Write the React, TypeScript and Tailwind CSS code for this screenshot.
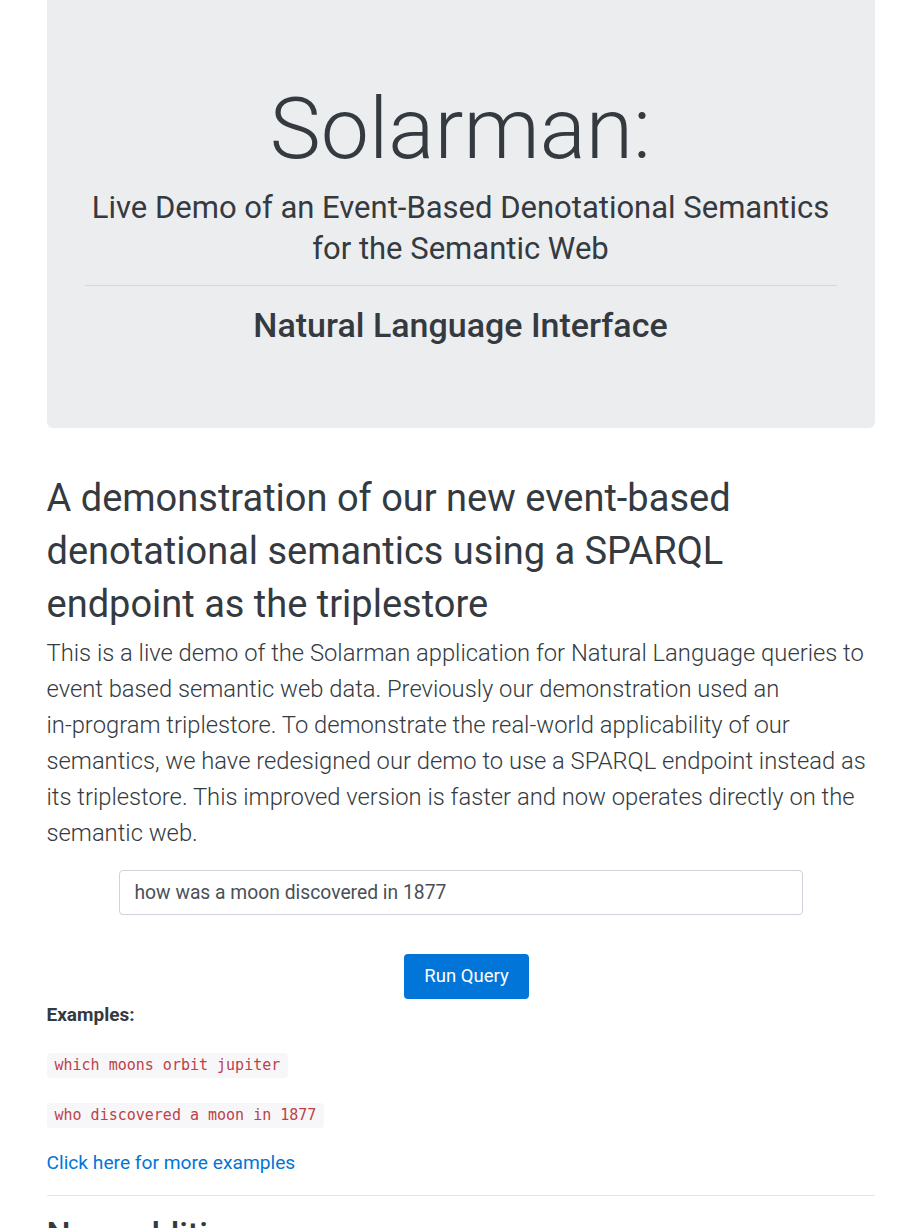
import { useState } from "react";

const examples = ["which moons orbit jupiter", "who discovered a moon in 1877"];

export default function App() {
  const [query, setQuery] = useState("how was a moon discovered in 1877");

  return (
    <div className="min-h-screen bg-white font-['Roboto',sans-serif] text-[#343a40]">
      <div className="mx-auto w-[828px]">
        <div className="rounded-b-md bg-[#ecedef] px-[38px] pb-[82px] pt-[77px] text-center">
          <h1 className="text-[86px] font-light leading-[1.2]">Solarman:</h1>
          <p className="mt-[7px] text-[31px] font-normal leading-[41px]">
            Live Demo of an Event-Based Denotational Semantics for the Semantic Web
          </p>
          <hr className="mt-[16px] border-t border-[#d6d8db]" />
          <h3 className="mt-[19px] text-[34px] font-medium leading-[1.2]">Natural Language Interface</h3>
        </div>

        <h1 className="mt-[44px] text-[38px] font-normal leading-[53px]">
          A demonstration of our new event-based denotational semantics using a SPARQL endpoint as the triplestore
        </h1>
        <p className="mt-[4px] text-[23.75px] font-light leading-[36px]">
          This is a live demo of the Solarman application for Natural Language queries to event based semantic web data.
          Previously our demonstration used an <span className="whitespace-nowrap">in-program</span> triplestore. To
          demonstrate the real-world applicability of our semantics, we have redesigned our demo to use a SPARQL endpoint
          instead as its triplestore. This improved version is faster and now operates directly on the semantic web.
        </p>

        <div className="mt-[19px] flex justify-center">
          <input
            value={query}
            onChange={(event) => setQuery(event.target.value)}
            className="h-[45px] w-[684px] rounded border border-[#ced4da] px-[15px] text-[19.3px] text-[#495057] outline-none"
          />
        </div>
        <div className="mt-[39px] flex justify-center pl-[12px]">
          <button
            type="button"
            className="h-[45px] rounded bg-[#0275d8] px-[20px] text-[18.5px] text-white"
          >
            Run Query
          </button>
        </div>

        <p className="mt-[2px] text-[19px] font-bold leading-[27px]">Examples:</p>
        <div className="mt-[25px] flex flex-col items-start gap-[25px]">
          {examples.map((example) => (
            <code
              key={example}
              className="rounded bg-[#f7f7f9] px-[8px] py-[2px] font-['DejaVu_Sans_Mono',monospace] text-[15px] leading-[21px] text-[#bd4147]"
            >
              {example}
            </code>
          ))}
        </div>
        <a href="#" className="mt-[21px] block text-[19.2px] leading-[28px] text-[#0275d8]">
          Click here for more examples
        </a>
        <hr className="mt-[18px] border-t border-[#e5e5e5]" />
        <h2 className="mt-[18px] text-[34px] font-medium leading-[1.2]">New additions</h2>
      </div>
    </div>
  );
}
